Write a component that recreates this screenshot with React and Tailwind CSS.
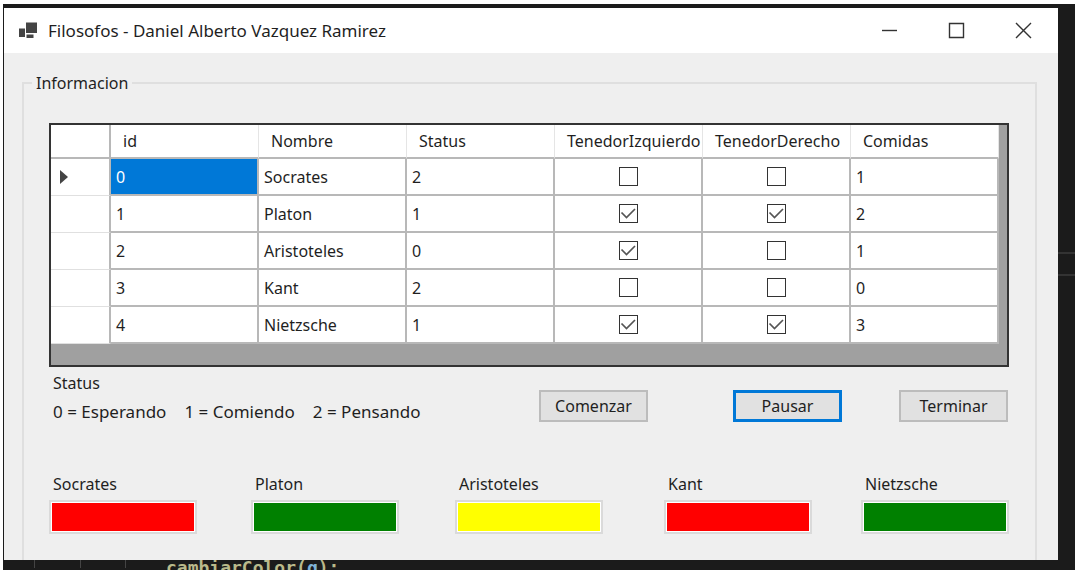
import React from "react";

const philosophers = [
  { id: 0, name: "Socrates", status: 2, left: false, right: false, meals: 1, color: "bg-[#ff0000]" },
  { id: 1, name: "Platon", status: 1, left: true, right: true, meals: 2, color: "bg-[#008000]" },
  { id: 2, name: "Aristoteles", status: 0, left: true, right: false, meals: 1, color: "bg-[#ffff00]" },
  { id: 3, name: "Kant", status: 2, left: false, right: false, meals: 0, color: "bg-[#ff0000]" },
  { id: 4, name: "Nietzsche", status: 1, left: true, right: true, meals: 3, color: "bg-[#008000]" },
];

const columns = ["id", "Nombre", "Status", "TenedorIzquierdo", "TenedorDerecho", "Comidas"];

function AppIcon() {
  return (
    <svg width="20" height="20" viewBox="0 0 20 20" aria-hidden="true">
      <path fill="#444" d="M8 1.5h11v10.5H8zM1 7.5h6v8.5H1zM8.5 13.5h7v3.5h-7z" />
    </svg>
  );
}

function WindowButton({ label, children }) {
  return (
    <button type="button" aria-label={label} className="flex w-[67px] items-center justify-center">
      <svg width="17" height="17" viewBox="0 0 17 17" fill="none" stroke="#333" strokeWidth="1.4" aria-hidden="true">
        {children}
      </svg>
    </button>
  );
}

function TitleBar() {
  return (
    <header className="flex h-[45px] bg-white pr-px pl-[14px]">
      <div className="flex flex-1 items-center gap-[10px] text-[17px]">
        <AppIcon />
        <h1>Filosofos - Daniel Alberto Vazquez Ramirez</h1>
      </div>
      <WindowButton label="Minimizar"><path d="M1 8.5h15" /></WindowButton>
      <WindowButton label="Maximizar"><path d="M1.5 1.5h14v14h-14z" /></WindowButton>
      <WindowButton label="Cerrar"><path d="M1 1l15 15M16 1L1 16" /></WindowButton>
    </header>
  );
}

function ForkCell({ label, checked }) {
  return (
    <td className="border-r-2 border-b-2 border-[#b8b8b8] p-0">
      <div className="grid place-items-center">
        <input
          type="checkbox"
          aria-label={label}
          defaultChecked={checked}
          className="peer col-start-1 row-start-1 size-[19px] appearance-none border border-[#333] bg-white"
        />
        <svg
          width="17"
          height="17"
          viewBox="0 0 17 17"
          fill="none"
          stroke="#555"
          strokeWidth="1.7"
          aria-hidden="true"
          className="pointer-events-none invisible col-start-1 row-start-1 peer-checked:visible"
        >
          <path d="M1.5 7.5L6.5 12.5L15 4" />
        </svg>
      </div>
    </td>
  );
}

function DataGrid() {
  return (
    <div className="border-2 border-[#333] bg-[#a0a0a0] pr-2 pb-[21px]">
      <table className="w-full table-fixed border-separate border-spacing-0 bg-white text-left">
        <thead>
          <tr className="h-[34px]">
            <td className="w-[60px] border-r-2 border-b-2 border-[#b8b8b8]" />
            {columns.map((c) => (
              <th key={c} scope="col" className="border-r border-b-2 border-r-[#e5e5e5] border-b-[#b8b8b8] p-0 pl-3 font-normal whitespace-nowrap">
                {c}
              </th>
            ))}
          </tr>
        </thead>
        <tbody>
          {philosophers.map((p, i) => (
            <tr key={p.id} className="h-[37px]">
              <td className="border-r-2 border-b border-r-[#b8b8b8] border-b-[#e0e0e0] p-0 pl-[9px]">
                {i === 0 && (
                  <svg width="9" height="14" viewBox="0 0 9 14" aria-hidden="true">
                    <path fill="#444" d="M0 0l8 7l-8 7z" />
                  </svg>
                )}
              </td>
              <td className={i === 0 ? "border-r-2 border-b-2 border-[#b8b8b8] bg-[#0078d7] p-0 pl-[5px] text-white" : "border-r-2 border-b-2 border-[#b8b8b8] p-0 pl-[5px]"}>
                {p.id}
              </td>
              <td className="border-r-2 border-b-2 border-[#b8b8b8] p-0 pl-[5px]">{p.name}</td>
              <td className="border-r-2 border-b-2 border-[#b8b8b8] p-0 pl-[5px]">{p.status}</td>
              <ForkCell label={`TenedorIzquierdo ${p.name}`} checked={p.left} />
              <ForkCell label={`TenedorDerecho ${p.name}`} checked={p.right} />
              <td className="border-r-2 border-b-2 border-[#b8b8b8] p-0 pl-[5px]">{p.meals}</td>
            </tr>
          ))}
        </tbody>
      </table>
    </div>
  );
}

function Controls() {
  return (
    <div className="flex justify-between pr-px">
      <div className="pt-1 pl-1">
        <p>Status</p>
        <p className="mt-[5px] flex gap-[18px] text-[17px]">
          <span>0 = Esperando</span>
          <span>1 = Comiendo</span>
          <span>2 = Pensando</span>
        </p>
      </div>
      <div className="flex items-start pt-[23px]">
        <button type="button" className="h-8 w-[109px] border-2 border-[#bcbcbc] bg-[#e1e1e1]">Comenzar</button>
        <button type="button" className="ml-[85px] h-8 w-[109px] border-[3px] border-[#0078d7] bg-[#e1e1e1]">Pausar</button>
        <button type="button" className="ml-[57px] h-8 w-[109px] border-2 border-[#bcbcbc] bg-[#e1e1e1]">Terminar</button>
      </div>
    </div>
  );
}

function ColorPanels() {
  return (
    <div className="mt-12 grid grid-cols-[202fr_204fr_209fr_197fr_148fr]">
      {philosophers.map((p) => (
        <div key={p.id} className="w-[148px]">
          <label htmlFor={`color-${p.id}`} className="block pl-1">{p.name}</label>
          <div className="mt-1 flex border-2 border-[#dadada] bg-white p-px">
            <input id={`color-${p.id}`} readOnly className={`h-7 w-full min-w-0 ${p.color}`} />
          </div>
        </div>
      ))}
    </div>
  );
}

export default function App() {
  return (
    <div className="bg-white pt-1 pb-[2px] pl-[3px] font-['Noto_Sans','Open_Sans',sans-serif] text-[16px] leading-6 text-[#1f1f1f]">
      <div className="bg-[#1b1b1b] pt-1 pl-px">
        <div className="flex">
          <main className="min-w-0 flex-1 bg-[#efefef]">
            <TitleBar />
            <div className="pt-[18px] pr-[21px] pl-[18px]">
              <fieldset className="min-w-0 border-2 border-b-0 border-[#dfdfdf] pt-7 pr-[26px] pb-[26px] pl-[25px]">
                <legend className="-ml-[17px] px-1">Informacion</legend>
                <DataGrid />
                <Controls />
                <ColorPanels />
              </fieldset>
            </div>
          </main>
          <aside className="w-[17px] pt-[244px]">
            <div className="h-6 border-y-2 border-[#333]" />
          </aside>
        </div>
        <div className="flex h-[10px] items-start overflow-hidden pl-[30px]">
          <div className="flex h-2 w-[92px] justify-between border-x border-[#444]">
            <span />
            <span className="w-px bg-[#444]" />
            <span />
          </div>
          <code className="ml-10 font-['DejaVu_Sans_Mono',monospace] text-[18px] leading-4 font-bold text-[#b9b98a]">
            cambiarColor(<span className="text-[#7fb2d6]">g</span>);
          </code>
        </div>
      </div>
    </div>
  );
}
